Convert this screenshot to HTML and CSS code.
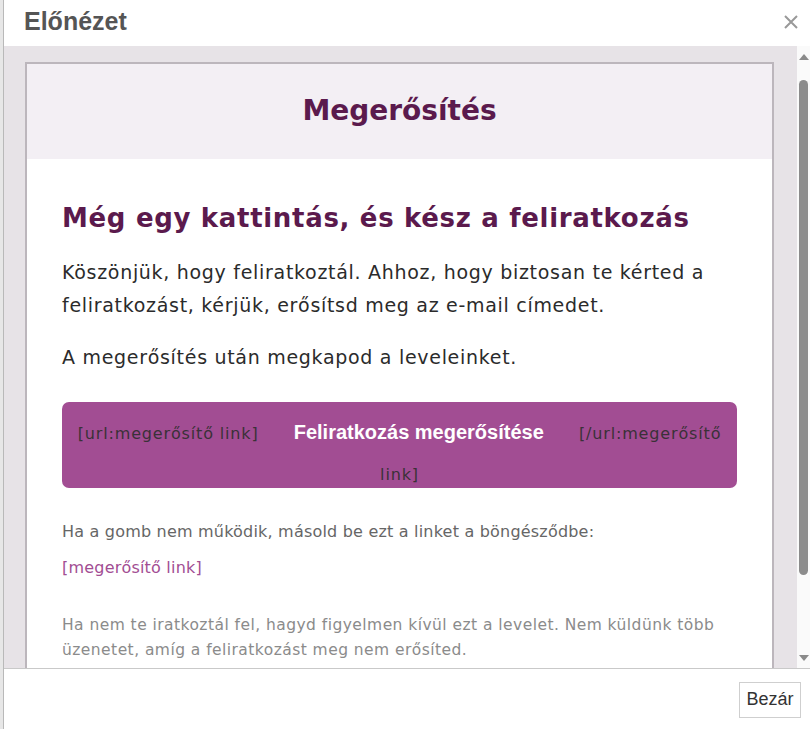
FILE: index.html
```html
<!DOCTYPE html>
<html lang="hu">
<head>
<meta charset="utf-8">
<title>Előnézet</title>
<link rel="stylesheet" href="styles.css">
</head>
<body>
<div class="page">
  <div class="backdrop-strip"></div>
  <div class="dialog">
    <div class="dialog-header">
      <h2 class="dialog-title">Előnézet</h2>
      <button class="close-btn" aria-label="Bezár">
        <svg width="14" height="14" viewBox="0 0 14 14"><path d="M1 1L13 13M13 1L1 13" stroke="#999" stroke-width="2" fill="none"/></svg>
      </button>
    </div>
    <div class="dialog-body">
      <div class="scroll-area">
        <div class="email-frame">
          <div class="email-head">Megerősítés</div>
          <div class="email-content">
            <h1 class="email-h1">Még egy kattintás, és kész a feliratkozás</h1>
            <p class="email-p">Köszönjük, hogy feliratkoztál. Ahhoz, hogy biztosan te kérted a feliratkozást, kérjük, erősítsd meg az e-mail címedet.</p>
            <p class="email-p">A megerősítés után megkapod a leveleinket.</p>
            <div class="cta"><span class="cta-tag">[url:megerősítő link]</span> <a class="cta-link">Feliratkozás megerősítése</a> <span class="cta-tag">[/url:megerősítő</span> <span class="cta-tag">link]</span></div>
            <p class="small">Ha a gomb nem működik, másold be ezt a linket a böngésződbe:</p>
            <p class="small link">[megerősítő link]</p>
            <p class="muted">Ha nem te iratkoztál fel, hagyd figyelmen kívül ezt a levelet. Nem küldünk több üzenetet, amíg a feliratkozást meg nem erősíted.</p>
          </div>
        </div>
      </div>
      <div class="scrollbar">
        <div class="arrow up"></div>
        <div class="track"><div class="thumb"></div></div>
        <div class="arrow down"></div>
      </div>
    </div>
    <div class="dialog-footer">
      <button class="close-footer">Bezár</button>
    </div>
  </div>
</div>
</body>
</html>
```

FILE: styles.css
```css
* { box-sizing: border-box; }
html, body { margin: 0; padding: 0; }
body {
  width: 810px;
  height: 729px;
  overflow: hidden;
  background: #ececec;
  font-family: "DejaVu Sans", Verdana, sans-serif;
}
.page {
  display: flex;
  height: 729px;
}
.backdrop-strip {
  width: 4px;
  flex: none;
  background: #e7e7e7;
  border-right: 1px solid #b9b9b9;
}
.dialog {
  flex: 1;
  display: flex;
  flex-direction: column;
  background: #fff;
  min-width: 0;
}
.dialog-header {
  height: 46px;
  flex: none;
  display: flex;
  align-items: center;
  justify-content: space-between;
  padding: 0 12px 0 20px;
}
.dialog-title {
  margin: 0;
  font-family: "Liberation Sans", Arial, sans-serif;
  font-weight: bold;
  font-size: 25px;
  color: #555;
  line-height: 1;
  padding-bottom: 3px;
}
.close-btn {
  border: 0;
  background: none;
  padding: 0;
  width: 14px;
  height: 14px;
  display: flex;
  margin-bottom: 2px;
}
.dialog-body {
  height: 623px;
  flex: none;
  display: flex;
  background: #e7e3e7;
  border-bottom: 1px solid #c9c9c9;
}
.scroll-area {
  flex: 1;
  overflow: hidden;
  padding: 16px 23px 0 21px;
}
.email-frame {
  border: 2px solid #bcb6bc;
  border-bottom: 0;
  background: #fff;
}
.email-head {
  background: #f3eff4;
  color: #5b1a4d;
  font-weight: bold;
  font-size: 28px;
  text-align: center;
  line-height: 35px;
  padding: 29px 0 31px;
}
.email-content {
  padding: 35px 35px 40px;
}
.email-h1 {
  margin: 0 0 14px;
  font-size: 26px;
  letter-spacing: 0.68px;
  line-height: 48px;
  font-weight: bold;
  color: #5b1a4d;
}
.email-p {
  margin: 0 0 19px;
  font-size: 19px;
  letter-spacing: 0.7px;
  line-height: 33px;
  color: #2b2b2b;
}
.cta {
  margin-top: 28px;
  background: #a24d93;
  border-radius: 7px;
  padding: 0 14px;
  text-align: center;
  font-size: 16px;
  line-height: 26px;
  color: #3a3138;
}
.cta-tag {
  letter-spacing: 0.85px;
}
.cta-link {
  display: inline-block;
  padding: 18px 30px;
  line-height: 24px;
  font-family: "Liberation Sans", Arial, sans-serif;
  font-weight: bold;
  font-size: 20px;
  color: #fff;
}
.small {
  margin: 32px 0 0;
  font-size: 16px;
  letter-spacing: 0.2px;
  line-height: 24px;
  color: #666;
}
.small.link {
  margin-top: 12px;
  color: #a24d93;
}
.muted {
  margin: 33px 0 0;
  font-size: 15.5px;
  letter-spacing: 0.45px;
  line-height: 25px;
  color: #8b8b8b;
}
.scrollbar {
  width: 13px;
  flex: none;
  background: #fafafa;
  display: flex;
  flex-direction: column;
  align-items: center;
}
.arrow {
  width: 0;
  height: 0;
  border-left: 5px solid transparent;
  border-right: 5px solid transparent;
}
.arrow.up {
  margin-top: 8px;
  border-bottom: 6px solid #8a8a8a;
}
.arrow.down {
  margin-bottom: 7px;
  border-top: 6px solid #8a8a8a;
}
.track {
  flex: 1;
  width: 100%;
  padding: 20px 2px 0 2px;
}
.thumb {
  height: 495px;
  background: #8c8c8c;
  border-radius: 5px;
}
.dialog-footer {
  flex: 1;
  display: flex;
  align-items: center;
  justify-content: flex-end;
  padding: 0 9px 0 0;
}
.close-footer {
  font-family: "Liberation Sans", Arial, sans-serif;
  font-size: 18px;
  color: #333;
  background: #fff;
  border: 1px solid #cfcfcf;
  height: 36px;
  width: 62px;
  padding: 0;
  margin-top: 1px;
}
```
